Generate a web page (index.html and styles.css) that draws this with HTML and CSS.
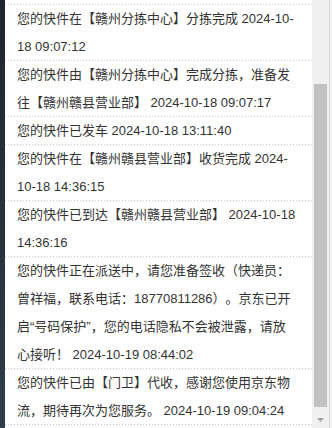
FILE: index.html
```html
<!DOCTYPE html>
<html lang="zh-CN">
<head>
    <meta charset="UTF-8">
    <meta name="viewport" content="width=device-width, initial-scale=1.0">
    <title>物流跟踪</title>
    <link rel="stylesheet" href="styles.css">
</head>
<body>
    <div class="side"></div>
    <ul class="track-list">
        <li class="track-item">您的快件在【赣州分拣中心】分拣完成 2024-10-18 09:07:12</li>
        <li class="track-item">您的快件由【赣州分拣中心】完成分拣，准备发往【赣州赣县营业部】 2024-10-18 09:07:17</li>
        <li class="track-item">您的快件已发车 2024-10-18 13:11:40</li>
        <li class="track-item">您的快件在【赣州赣县营业部】收货完成 2024-10-18 14:36:15</li>
        <li class="track-item">您的快件已到达【赣州赣县营业部】 2024-10-18 14:36:16</li>
        <li class="track-item">您的快件正在派送中，请您准备签收（快递员：曾祥福，联系电话：18770811286）。京东已开启“号码保护”，您的电话隐私不会被泄露，请放心接听！ 2024-10-19 08:44:02</li>
        <li class="track-item">您的快件已由【门卫】代收，感谢您使用京东物流，期待再次为您服务。 2024-10-19 09:04:24</li>
    </ul>
    <div class="scrollbar">
        <div class="scroll-track">
            <div class="scroll-thumb"></div>
        </div>
        <div class="scroll-btn">
            <svg width="7" height="4" viewBox="0 0 7 4"><polygon points="0,0 7,0 3.5,4" fill="#a3a3a3"/></svg>
        </div>
    </div>
</body>
</html>
```

FILE: styles.css
```css
html, body {
    height: 100%;
}
body {
    margin: 0;
    display: flex;
    overflow: hidden;
    background-color: #fff;
    font-family: "Liberation Sans", "Noto Sans CJK SC", sans-serif;
    font-size: 13px;
    color: #333;
    text-spacing-trim: space-all;
}
.side {
    width: 5px;
    flex-shrink: 0;
    background: linear-gradient(#1f252e, #2f3d4a);
}
.track-list {
    flex: 1;
    list-style: none;
    margin: 0;
    padding: 5px 0 0;
    background: repeating-linear-gradient(to right, #c6c6c6 0 1px, transparent 1px 3px) 0 4px / 100% 1px no-repeat;
}
.track-item {
    padding: 0 14px 0 12px;
    line-height: 28px;
    background: repeating-linear-gradient(to right, #c6c6c6 0 1px, transparent 1px 3px) left bottom / 100% 1px no-repeat;
}
.scrollbar {
    width: 17px;
    flex-shrink: 0;
    display: flex;
    flex-direction: column;
    background-color: #f0f0f0;
    border-right: 1px solid #dadada;
    margin-right: 2px;
    box-shadow: 2px 0 0 #f0f0f0;
}
.scroll-track {
    flex: 1;
    padding: 84px 2px 4px;
    display: flex;
}
.scroll-thumb {
    flex: 1;
    background-color: #c1c1c1;
}
.scroll-btn {
    height: 17px;
    display: flex;
    align-items: center;
    justify-content: center;
}
.scroll-btn svg {
    display: block;
}
```
